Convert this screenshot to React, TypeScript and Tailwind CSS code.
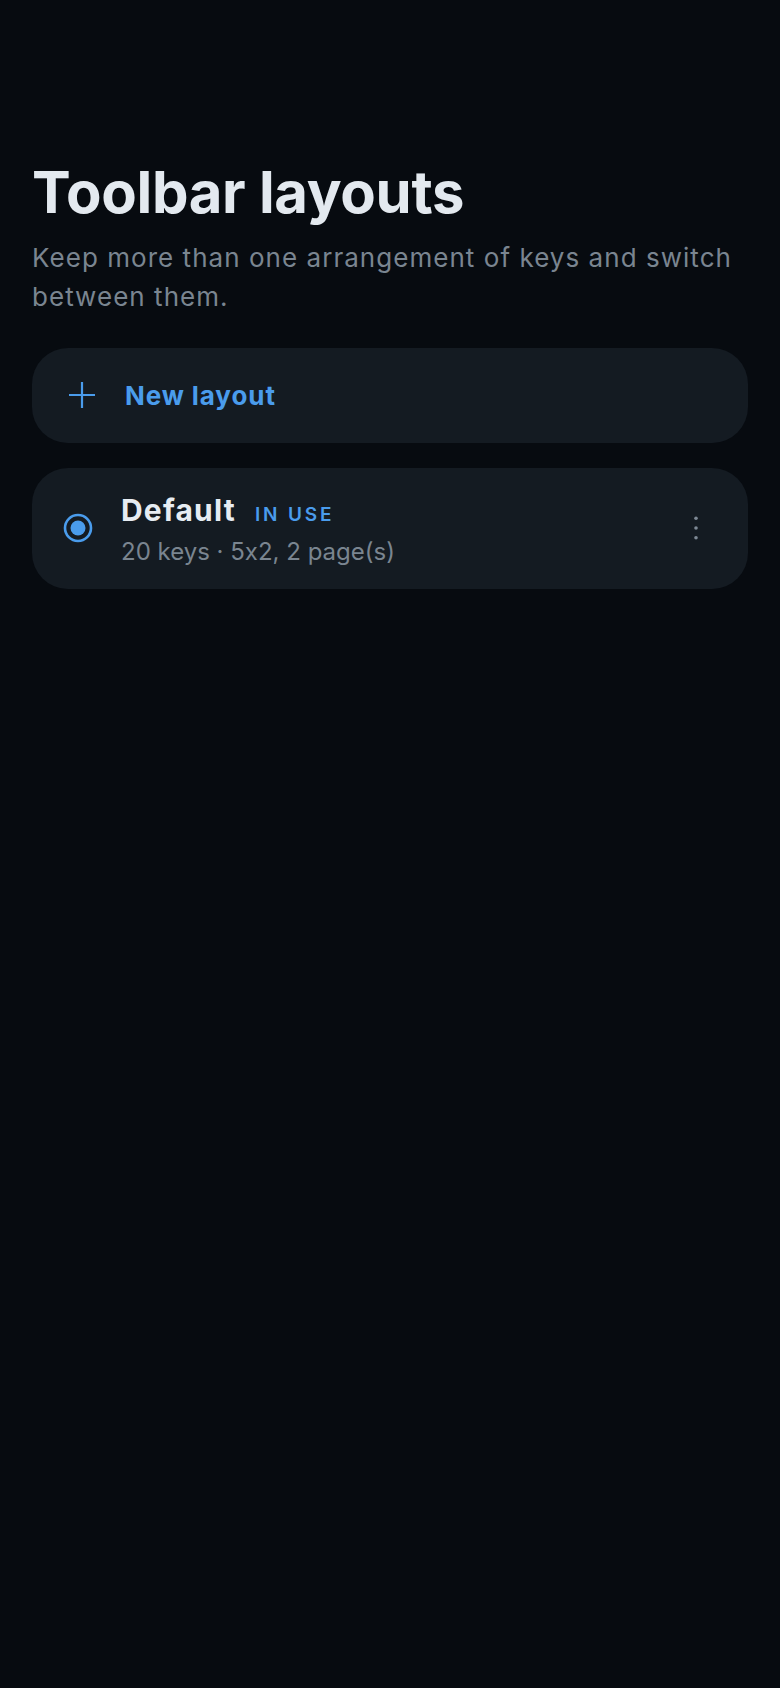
function PlusIcon() {
  return (
    <svg width="28" height="28" viewBox="0 0 28 28" fill="none" className="shrink-0">
      <path d="M14 1v26M1 14h26" stroke="#4a9cec" strokeWidth="2.2" />
    </svg>
  );
}

function RadioOn() {
  return (
    <svg width="30" height="30" viewBox="0 0 30 30" fill="none" className="shrink-0">
      <circle cx="15" cy="15" r="13" stroke="#4a9cec" strokeWidth="2.6" />
      <circle cx="15" cy="15" r="7.5" fill="#4a9cec" />
    </svg>
  );
}

function DotsIcon() {
  return (
    <svg width="24" height="30" viewBox="0 0 24 30" fill="#7d8894" className="shrink-0">
      <circle cx="12" cy="5.3" r="1.8" />
      <circle cx="12" cy="15" r="1.8" />
      <circle cx="12" cy="24.7" r="1.8" />
    </svg>
  );
}

export default function App() {
  return (
    <div
      className="min-h-screen bg-[#070b10] px-8 pt-[161px] [font-feature-settings:'calt'_0]"
      style={{ fontFamily: "Inter, 'Noto Sans', sans-serif" }}
    >
      <h1 className="text-[58px] leading-[1.1] font-bold tracking-[-0.005em] text-[#e3e9ef]">
        Toolbar layouts
      </h1>
      <p className="mt-[13px] text-[26px] leading-[39px] tracking-[0.04em] text-[#7a8590]">
        Keep more than one arrangement of keys and switch between them.
      </p>

      <button className="mt-8 flex h-[95px] w-full items-center gap-[29px] rounded-[36px] bg-[#141b22] pl-[36px] text-left">
        <PlusIcon />
        <span className="text-[26px] font-bold tracking-[0.035em] text-[#4a9cec]">New layout</span>
      </button>

      <div className="mt-[25px] flex h-[121px] w-full items-center rounded-[36px] bg-[#141b22] pl-[31px] pr-[40px]">
        <RadioOn />
        <div className="ml-[28px] flex flex-1 flex-col pt-[2px]">
          <div className="flex items-baseline gap-[19px]">
            <span className="text-[30px] leading-[38px] font-bold tracking-[0.04em] text-[#e6ecf2]">Default</span>
            <span className="text-[19px] font-semibold tracking-[0.15em] text-[#4a9cec]">IN USE</span>
          </div>
          <span className="mt-[7px] text-[24px] leading-[32px] text-[#7a8590]">
            20 keys · 5x2, 2 page(s)
          </span>
        </div>
        <DotsIcon />
      </div>
    </div>
  );
}
